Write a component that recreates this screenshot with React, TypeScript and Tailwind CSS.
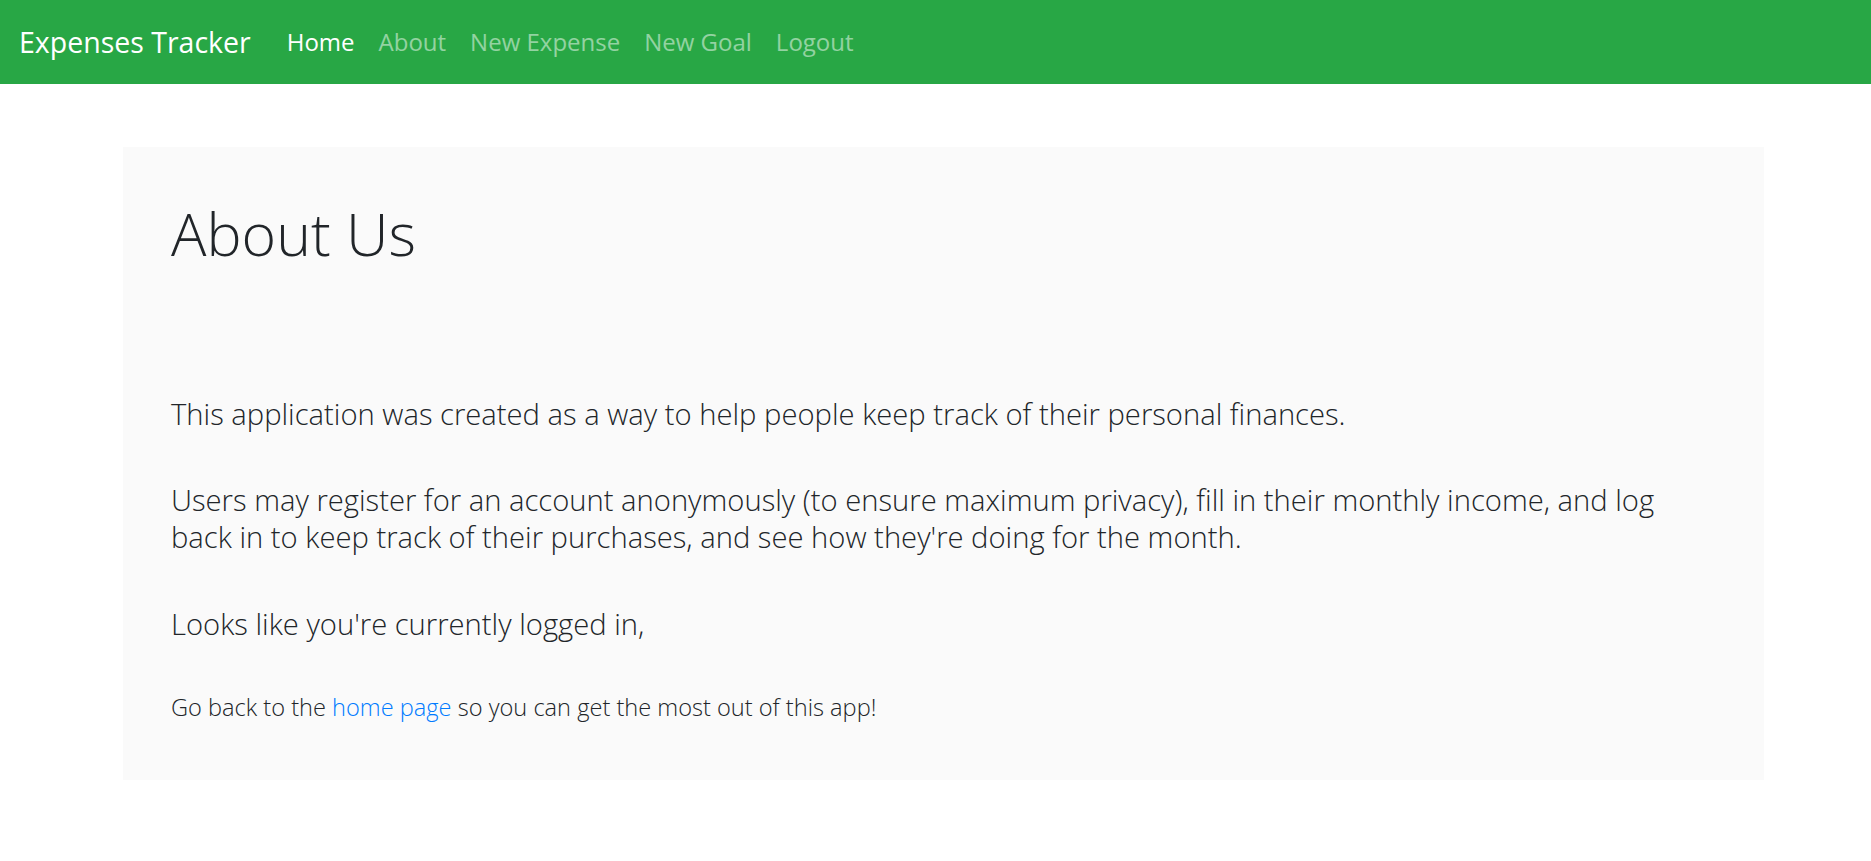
export default function App() {
  const links = [
    { label: "Home", active: true },
    { label: "About", active: false },
    { label: "New Expense", active: false },
    { label: "New Goal", active: false },
    { label: "Logout", active: false },
  ];

  return (
    <div className="min-h-screen bg-white font-['Open_Sans','Noto_Sans',sans-serif] text-[#212529]">
      <nav className="flex h-[84px] items-center bg-[#28a745] pl-[19px] pr-[24px]">
        <a href="#" className="mr-[24px] text-[28.5px] leading-[45px] text-white">
          Expenses Tracker
        </a>
        <ul className="flex">
          {links.map((l) => (
            <li key={l.label}>
              <a
                href="#"
                className={
                  "block px-[12px] text-[24px] leading-[36px] " +
                  (l.active ? "text-white" : "text-white/50")
                }
              >
                {l.label}
              </a>
            </li>
          ))}
        </ul>
      </nav>

      <main className="ml-[123px] mt-[63px] w-[1641px] bg-[#fafafa] px-[48px] pb-[55px] pt-[48px] font-light">
        <h1 className="text-[59px] leading-[77px]">About Us</h1>
        <p className="mt-[124px] text-[29.2px] leading-[36px]">
          This application was created as a way to help people keep track of their personal finances.
        </p>
        <p className="mt-[50px] text-[29.2px] leading-[36.5px]">
          Users may register for an account anonymously (to ensure maximum privacy), fill in their monthly income, and log
          <br />
          back in to keep track of their purchases, and see how they're doing for the month.
        </p>
        <p className="mt-[51px] text-[29.2px] leading-[36px]">Looks like you're currently logged in,</p>
        <p className="mt-[47px] text-[23.6px] leading-[36px]">
          Go back to the{" "}
          <a href="#" className="text-[#007bff]">
            home page
          </a>{" "}
          so you can get the most out of this app!
        </p>
      </main>
    </div>
  );
}
